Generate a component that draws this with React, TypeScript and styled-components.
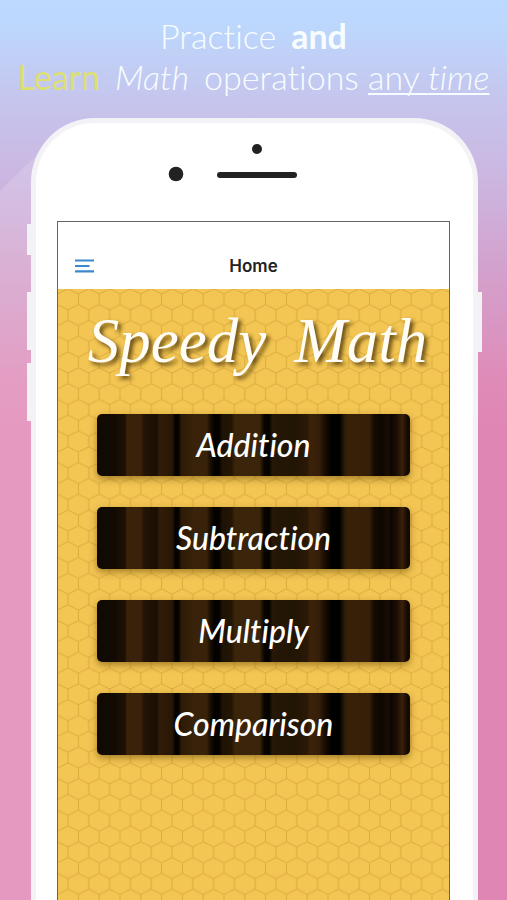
import React from 'react';
import styled, { createGlobalStyle } from 'styled-components';

const honeycomb = `url("data:image/svg+xml,${encodeURIComponent(
  `<svg xmlns="http://www.w3.org/2000/svg" width="104" height="158" viewBox="0 0 104 158"><defs><pattern id="h" width="20.8" height="31.6" patternUnits="userSpaceOnUse"><path d="M10.4 0V10.6L0 15.8V26.4L10.4 31.6L20.8 26.4V15.8L10.4 10.6" fill="none" stroke="#d6a93c" stroke-width="0.9"/></pattern></defs><rect width="104" height="158" fill="url(#h)"/></svg>`,
)}")`;

const GlobalStyle = createGlobalStyle`
  *, *::before, *::after { box-sizing: border-box; }
  body { margin: 0; }
`;

const Page = styled.div`
  position: relative;
  min-height: 100vh;
  overflow: hidden;
  display: flex;
  flex-direction: column;
  background: linear-gradient(180deg, #bcd9ff 0, #bdd6fc 30px, #c6c4ec 105px, #cbb6e0 180px, #d3a1cc 270px, #df8bb8 380px, #e086b4 430px, #e086b4 100%);
`;

const Glow = styled.svg`
  position: absolute;
  inset: 0;
  width: 100%;
  height: 100%;
`;

const Headline = styled.h1`
  position: relative;
  margin: 0;
  padding-top: 15px;
  height: 118px;
  color: #f7fdff;
  text-align: center;
  white-space: nowrap;
  font: 300 34px/41px Lato, sans-serif;
  font-variant-ligatures: none;
`;

const Line = styled.span`
  display: flex;
  justify-content: center;
  align-items: baseline;
  gap: 15px;
`;

const Strong = styled.b`
  font-weight: 700;
`;

const Learn = styled.span`
  color: #dde070;
  font-weight: 400;
`;

const Underlined = styled.u`
  text-decoration-thickness: 2px;
  text-underline-offset: 3px;
  text-decoration-skip-ink: none;
`;

const Phone = styled.div`
  position: relative;
  flex: 1;
  display: flex;
  flex-direction: column;
  margin: 0 29px 0 31px;
  padding: 0 23px 0 21px;
  background: #fff;
  border: 5px solid #f3f2f6;
  border-bottom: 0;
  border-radius: 64px 64px 0 0;
`;

const SideKey = styled.span<{ $top: number; $height: number; $right?: boolean }>`
  position: absolute;
  top: ${({ $top }) => $top}px;
  ${({ $right }) => ($right ? 'right: -9px' : 'left: -9px')};
  width: 4px;
  height: ${({ $height }) => $height}px;
  background: #f3f2f4;
`;

const Bezel = styled.div`
  display: flex;
  justify-content: center;
  height: 98px;
  padding-top: 21px;
`;

const Sensor = styled.svg`
  display: block;
  width: 180px;
  height: 44px;
`;

const Screen = styled.main`
  flex: 1;
  display: flex;
  flex-direction: column;
  border: 1px solid #66645f;
  border-bottom: 0;
`;

const NavBar = styled.header`
  display: grid;
  grid-template-columns: 1fr auto 1fr;
  align-items: center;
  height: 67px;
  padding: 20px 17px 0;
`;

const MenuButton = styled.button`
  justify-self: start;
  display: block;
  padding: 0;
  border: 0;
  background: none;
  cursor: pointer;

  svg {
    display: block;
  }
`;

const NavTitle = styled.h2`
  margin: 0;
  color: #222;
  font: 600 17px/24px Inter, sans-serif;
`;

const Content = styled.section`
  flex: 1;
  display: flex;
  flex-direction: column;
  align-items: center;
  padding-bottom: 32px;
  background: ${honeycomb} 10px 5px, #f3c552;
`;

const Logo = styled.h3`
  display: flex;
  gap: 28px;
  margin: 0;
  height: 125px;
  padding: 14px 0 0 8px;
  color: #fffdf5;
  white-space: nowrap;
  font: italic 400 63px/76px "Liberation Serif", serif;
  text-shadow: 3px 3px 4px rgba(60, 40, 0, 0.8);
`;

const Menu = styled.nav`
  align-self: stretch;
  display: grid;
  gap: 31px;
  padding: 0 39px;
`;

const WoodButton = styled.button`
  height: 62px;
  padding: 0;
  border: 0;
  border-radius: 5px;
  color: #fff;
  cursor: pointer;
  font: italic 500 32px/40px Lato, sans-serif;
  font-variant-ligatures: none;
  box-shadow: 0 3px 7px rgba(90, 60, 0, 0.5);
  background: linear-gradient(90deg,
    #100a02 0, #130b03 6%, #1c1004 8%, #1c1004 9%, #3a210a 9.5%, #3a210a 14%,
    #241405 15%, #1a0f03 19%, #301c08 20%, #281704 24%, #050300 25%, #050300 26%,
    #2e1b07 27%, #38220a 31%, #382209 35%, #1e1203 36%, #030200 37.5%, #030200 39%,
    #1d1204 40%, #231604 43%, #3a240a 44%, #3a240a 52%, #080400 53.5%, #030200 55%,
    #261706 56%, #211504 62%, #291805 67%, #3b220a 68%, #351e09 71%, #160c02 73%,
    #000 75%, #000 77.5%, #291a08 79%, #382009 80%, #361f08 87%, #150b02 88.5%,
    #0d0601 91%, #1a0d03 93%, #0c0601 94%, #1d0f04 96%, #3b210b 97.5%, #170c03 99%, #100801 100%);
`;

const operations = ['Addition', 'Subtraction', 'Multiply', 'Comparison'];

export default function App() {
  return (
    <Page>
      <GlobalStyle />
      <Glow viewBox="0 0 507 900" preserveAspectRatio="none" aria-hidden="true">
        <path d="M0 191L40 152V900H0Z" fill="#fff" fillOpacity="0.16" />
      </Glow>
      <Headline>
        <Line>
          <span>Practice</span>
          <Strong>and</Strong>
        </Line>
        <Line>
          <Learn>Learn</Learn>
          <i>Math</i>
          <span>
            operations <Underlined>any <i>time</i></Underlined>
          </span>
        </Line>
      </Headline>
      <Phone>
        <SideKey $top={101} $height={31} />
        <SideKey $top={169} $height={58} />
        <SideKey $top={240} $height={58} />
        <SideKey $top={169} $height={60} $right />
        <Bezel>
          <Sensor viewBox="0 0 180 44" aria-hidden="true">
            <circle cx="93" cy="5" r="5" fill="#222" />
            <circle cx="12" cy="30" r="7.3" fill="#222" />
            <rect x="53" y="28" width="80" height="6" rx="3" fill="#222" />
          </Sensor>
        </Bezel>
        <Screen>
          <NavBar>
            <MenuButton aria-label="Menu">
              <svg width="19" height="14" viewBox="0 0 19 14">
                <path d="M0 1.5H19M0 7H14.5M0 12.3H19" stroke="#3c88cf" strokeWidth="2.2" />
              </svg>
            </MenuButton>
            <NavTitle>Home</NavTitle>
          </NavBar>
          <Content>
            <Logo>
              <span>Speedy</span>
              <span>Math</span>
            </Logo>
            <Menu>
              {operations.map((name) => (
                <WoodButton key={name}>{name}</WoodButton>
              ))}
            </Menu>
          </Content>
        </Screen>
      </Phone>
    </Page>
  );
}
